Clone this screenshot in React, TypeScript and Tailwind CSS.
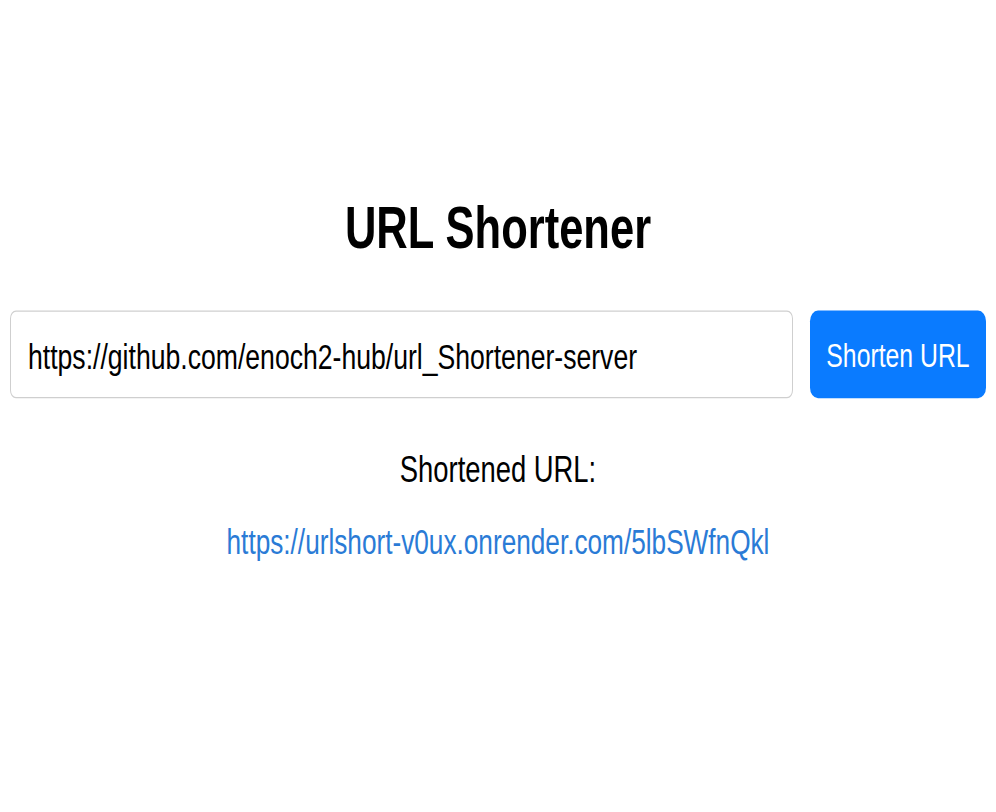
import { useState } from "react";

export default function App() {
  const [url, setUrl] = useState("https://github.com/enoch2-hub/url_Shortener-server");
  const shortUrl = "https://urlshort-v0ux.onrender.com/5lbSWfnQkl";

  return (
    <div className="h-[812px] w-full overflow-hidden bg-white font-['Liberation_Sans',Arial,sans-serif] text-black">
      {/* the shot is stretched vertically, so the whole page is too */}
      <div className="flex h-[602px] origin-top scale-y-[1.35] flex-col items-center px-[10px] pt-[148px]">
        <h1 className="text-[43.5px] font-bold leading-none">URL Shortener</h1>

        <form
          className="mt-[38px] flex w-full gap-[17px]"
          onSubmit={(e) => e.preventDefault()}
        >
          <input
            value={url}
            onChange={(e) => setUrl(e.target.value)}
            className="h-[65px] min-w-0 flex-1 rounded-md border border-[#cfcfcf] px-[17px] pt-[4px] text-[26.6px] text-black outline-none"
          />
          <button
            type="submit"
            className="h-[65px] w-[176px] shrink-0 rounded-lg bg-[#0a7bff] pt-[4px] text-[24.8px] text-white"
          >
            Shorten URL
          </button>
        </form>

        <p className="mt-[39px] text-[27.4px] leading-none">Shortened URL:</p>
        <a href={shortUrl} className="mt-[27px] text-[26.2px] leading-none text-[#2a7bd6]">
          {shortUrl}
        </a>
      </div>
    </div>
  );
}
